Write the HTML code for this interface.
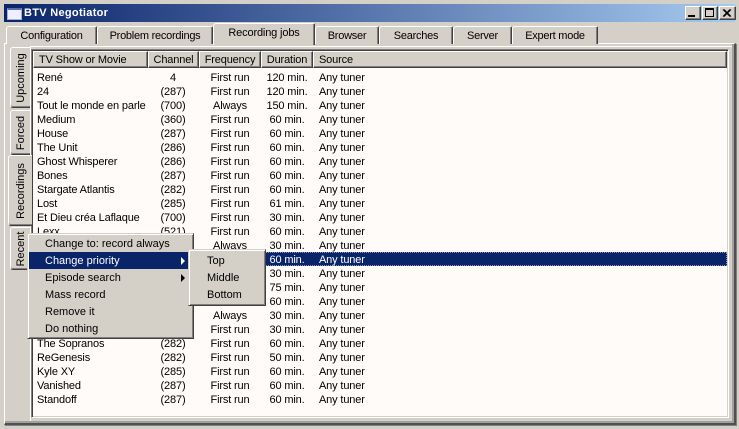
<!DOCTYPE html>
<html><head><meta charset="utf-8">
<style>
html,body{margin:0;padding:0;background:#d4d0c8}
#w{position:relative;width:739px;height:429px;overflow:hidden;background:#d4d0c8;font:11px/14px "Liberation Sans",sans-serif;color:#000}
#w div{position:absolute;box-sizing:border-box;white-space:nowrap}
.tab{background:#d4d0c8;border-top:1px solid #fff;border-left:1px solid #fff;border-right:1px solid #404040;text-align:center;line-height:18px;letter-spacing:-.25px;border-top-left-radius:3px;border-top-right-radius:2px;box-shadow:inset -1px 0 0 #808080}
.st{background:#d4d0c8;border-top:1px solid #fff;border-left:1px solid #fff;border-bottom:1px solid #404040;border-top-left-radius:3px;border-bottom-left-radius:3px;box-shadow:inset 0 -1px 0 #808080}
.st span{position:absolute;left:50%;top:50%;transform:translate(-50%,-50%) rotate(-90deg);white-space:nowrap;display:block}
.h{top:51px;height:17px;background:#d4d0c8;border-top:1px solid #fff;border-left:1px solid #fff;border-right:1px solid #404040;border-bottom:1px solid #404040;box-shadow:inset -1px -1px 0 #808080;line-height:16px;padding-left:5px;letter-spacing:-.15px}
.r{left:37px;width:690px;height:14px;letter-spacing:-.15px}
.r span{position:absolute;top:1px;line-height:14px;white-space:nowrap}
.n{left:0}
.c{left:112px;width:48px;text-align:center}
.f{left:162px;width:62px;text-align:center}
.d{left:224px;width:52px;text-align:center}
.s{left:282px}
.menu{background:#d4d0c8;border-top:1px solid #d4d0c8;border-left:1px solid #d4d0c8;border-right:1px solid #404040;border-bottom:1px solid #404040;box-shadow:inset 1px 1px 0 #fff,inset -1px -1px 0 #808080}
.mi{height:17px;line-height:19px}
.b{top:6px;height:14px;background:#d4d0c8;border:1px solid;border-color:#fff #404040 #404040 #fff;box-shadow:inset -1px -1px 0 #808080}
</style></head><body><div id="w">
<!-- title -->
<div style="left:4px;top:4px;width:731px;height:18px;background:linear-gradient(90deg,#0a246a,#a6caf0)"></div>
<div style="left:7px;top:8px;width:15px;height:12px;background:#eef0ff;border:1px solid #a8b0d8;border-top:2px solid #5a6cb0"></div>
<div style="left:24px;top:6px;color:#fff;font-weight:bold;font-size:11px;line-height:14px;letter-spacing:.3px">BTV Negotiator</div>
<!-- title buttons -->
<div class="b" style="left:685px;width:16px"><div style="left:2px;top:8px;width:7px;height:2px;background:#000"></div></div>
<div class="b" style="left:702px;width:16px"><div style="left:2px;top:1px;width:9px;height:9px;border:1px solid #000;border-top-width:2px"></div></div>
<div class="b" style="left:719px;width:17px"><svg width="14" height="12" style="position:absolute;left:0;top:0"><path d="M3 2.5L10 9.5M4 2.5L11 9.5M10 2.5L3 9.5M11 2.5L4 9.5" stroke="#000" stroke-width="1"/></svg></div>
<!-- outer tab pane -->
<div style="left:4px;top:43px;width:732px;height:382px;border-top:1px solid #fff;border-left:1px solid #fff;border-right:2px solid #505050;border-bottom:2px solid #505050;box-shadow:inset -2px -2px 0 #a0a0a0,1px 1px 0 #808080"></div>
<!-- top tabs -->
<div class="tab" style="left:6px;top:26px;width:91px;height:18px">Configuration</div>
<div class="tab" style="left:97px;top:26px;width:116px;height:18px">Problem recordings</div>
<div class="tab" style="left:315px;top:26px;width:64px;height:18px">Browser</div>
<div class="tab" style="left:379px;top:26px;width:74px;height:18px">Searches</div>
<div class="tab" style="left:453px;top:26px;width:59px;height:18px">Server</div>
<div class="tab" style="left:512px;top:26px;width:86px;height:18px">Expert mode</div>
<div class="tab" style="left:213px;top:23px;width:102px;height:22px;z-index:2;line-height:19px;letter-spacing:-.15px">Recording jobs</div>
<!-- inner pane -->
<div style="left:30px;top:46px;width:702px;height:375px;border-top:1px solid #fff;border-left:1px solid #fff"></div>
<!-- side tabs -->
<div class="st" style="left:10px;top:47px;width:20px;height:61px"><span>Upcoming</span></div>
<div class="st" style="left:10px;top:110px;width:20px;height:45px"><span>Forced</span></div>
<div class="st" style="left:10px;top:227px;width:20px;height:43px"><span>Recent</span></div>
<div class="st" style="left:8px;top:155px;width:24px;height:71px;z-index:2"><span>Recordings</span></div>
<!-- list -->
<div style="left:31px;top:49px;width:698px;height:369px;background:#fffbf8;border:1px solid;border-color:#808080 #fff #fff #808080;box-shadow:inset 1px 1px 0 #404040,inset -1px -1px 0 #d4d0c8"></div>
<div class="h" style="left:33px;width:115px">TV Show or Movie</div>
<div class="h" style="left:148px;width:51px;text-align:center;padding:0">Channel</div>
<div class="h" style="left:199px;width:62px;text-align:center;padding:0">Frequency</div>
<div class="h" style="left:261px;width:52px;text-align:center;padding:0">Duration</div>
<div class="h" style="left:313px;width:414px">Source</div>
<div style="left:33px;top:252px;width:694px;height:14px;background:#0a246a;outline:1px dotted #8a94b8;outline-offset:-1px"></div>
<div class="r" style="top:70px"><span class="n">René</span><span class="c">4</span><span class="f">First run</span><span class="d">120 min.</span><span class="s">Any tuner</span></div>
<div class="r" style="top:84px"><span class="n">24</span><span class="c">(287)</span><span class="f">First run</span><span class="d">120 min.</span><span class="s">Any tuner</span></div>
<div class="r" style="top:98px"><span class="n">Tout le monde en parle</span><span class="c">(700)</span><span class="f">Always</span><span class="d">150 min.</span><span class="s">Any tuner</span></div>
<div class="r" style="top:112px"><span class="n">Medium</span><span class="c">(360)</span><span class="f">First run</span><span class="d">60 min.</span><span class="s">Any tuner</span></div>
<div class="r" style="top:126px"><span class="n">House</span><span class="c">(287)</span><span class="f">First run</span><span class="d">60 min.</span><span class="s">Any tuner</span></div>
<div class="r" style="top:140px"><span class="n">The Unit</span><span class="c">(286)</span><span class="f">First run</span><span class="d">60 min.</span><span class="s">Any tuner</span></div>
<div class="r" style="top:154px"><span class="n">Ghost Whisperer</span><span class="c">(286)</span><span class="f">First run</span><span class="d">60 min.</span><span class="s">Any tuner</span></div>
<div class="r" style="top:168px"><span class="n">Bones</span><span class="c">(287)</span><span class="f">First run</span><span class="d">60 min.</span><span class="s">Any tuner</span></div>
<div class="r" style="top:182px"><span class="n">Stargate Atlantis</span><span class="c">(282)</span><span class="f">First run</span><span class="d">60 min.</span><span class="s">Any tuner</span></div>
<div class="r" style="top:196px"><span class="n">Lost</span><span class="c">(285)</span><span class="f">First run</span><span class="d">61 min.</span><span class="s">Any tuner</span></div>
<div class="r" style="top:210px"><span class="n">Et Dieu créa Laflaque</span><span class="c">(700)</span><span class="f">First run</span><span class="d">30 min.</span><span class="s">Any tuner</span></div>
<div class="r" style="top:224px"><span class="n">Lexx</span><span class="c">(521)</span><span class="f">First run</span><span class="d">60 min.</span><span class="s">Any tuner</span></div>
<div class="r" style="top:238px"><span class="f">Always</span><span class="d">30 min.</span><span class="s">Any tuner</span></div>
<div class="r" style="top:252px;color:#fff"><span class="d">60 min.</span><span class="s">Any tuner</span></div>
<div class="r" style="top:266px"><span class="d">30 min.</span><span class="s">Any tuner</span></div>
<div class="r" style="top:280px"><span class="d">75 min.</span><span class="s">Any tuner</span></div>
<div class="r" style="top:294px"><span class="d">60 min.</span><span class="s">Any tuner</span></div>
<div class="r" style="top:308px"><span class="f">Always</span><span class="d">30 min.</span><span class="s">Any tuner</span></div>
<div class="r" style="top:322px"><span class="f">First run</span><span class="d">30 min.</span><span class="s">Any tuner</span></div>
<div class="r" style="top:336px"><span class="n">The Sopranos</span><span class="c">(282)</span><span class="f">First run</span><span class="d">60 min.</span><span class="s">Any tuner</span></div>
<div class="r" style="top:350px"><span class="n">ReGenesis</span><span class="c">(282)</span><span class="f">First run</span><span class="d">50 min.</span><span class="s">Any tuner</span></div>
<div class="r" style="top:364px"><span class="n">Kyle XY</span><span class="c">(285)</span><span class="f">First run</span><span class="d">60 min.</span><span class="s">Any tuner</span></div>
<div class="r" style="top:378px"><span class="n">Vanished</span><span class="c">(287)</span><span class="f">First run</span><span class="d">60 min.</span><span class="s">Any tuner</span></div>
<div class="r" style="top:392px"><span class="n">Standoff</span><span class="c">(287)</span><span class="f">First run</span><span class="d">60 min.</span><span class="s">Any tuner</span></div>
<!-- context menu -->
<div class="menu" style="left:27px;top:233px;width:167px;height:106px;z-index:5">
<div class="mi" style="left:1px;top:1px;width:163px;padding-left:16px">Change to: record always</div>
<div class="mi" style="left:1px;top:18px;width:163px;padding-left:16px;background:#0a246a;color:#fff">Change priority<svg width="5" height="8" style="position:absolute;left:152px;top:5px"><path d="M0 0L4 4L0 8Z" fill="#fff"/></svg></div>
<div class="mi" style="left:1px;top:35px;width:163px;padding-left:16px">Episode search<svg width="5" height="8" style="position:absolute;left:152px;top:5px"><path d="M0 0L4 4L0 8Z" fill="#000"/></svg></div>
<div class="mi" style="left:1px;top:52px;width:163px;padding-left:16px">Mass record</div>
<div class="mi" style="left:1px;top:69px;width:163px;padding-left:16px">Remove it</div>
<div class="mi" style="left:1px;top:86px;width:163px;padding-left:16px">Do nothing</div>
</div>
<div class="menu" style="left:188px;top:249px;width:78px;height:57px;z-index:6">
<div class="mi" style="left:1px;top:2px;width:72px;padding-left:17px">Top</div>
<div class="mi" style="left:1px;top:19px;width:72px;padding-left:17px">Middle</div>
<div class="mi" style="left:1px;top:36px;width:72px;padding-left:17px">Bottom</div>
</div>
</div></body></html>
